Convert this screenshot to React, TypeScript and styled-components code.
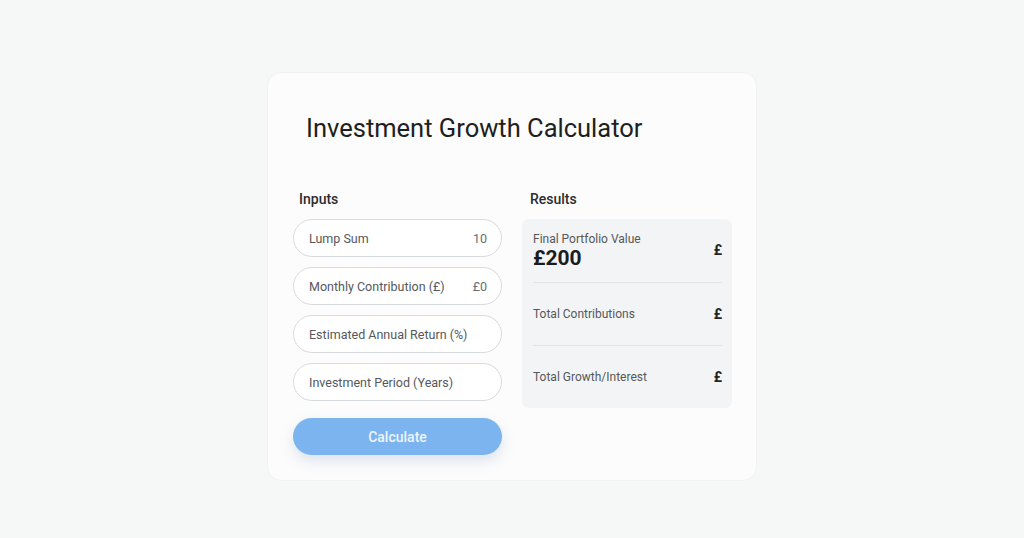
import React from "react";
import styled, { createGlobalStyle } from "styled-components";

const Global = createGlobalStyle`
  html, body { margin: 0; padding: 0; }
  body {
    background: #f6f7f7;
    font-family: Roboto, "Liberation Sans", Arial, sans-serif;
    -webkit-font-smoothing: antialiased;
  }
`;

const Page = styled.div`
  width: 1024px;
  height: 538px;
  display: flex;
  justify-content: center;
  align-items: flex-start;
  padding-top: 72px;
  box-sizing: border-box;
`;

const Card = styled.div`
  width: 490px;
  height: 409px;
  box-sizing: border-box;
  background: #fcfcfc;
  border: 1px solid #f0f1f1;
  border-radius: 14px;
  padding: 40px 24px 0 25px;
  display: flex;
  flex-direction: column;
`;

const Title = styled.h1`
  margin: 0 0 0 13px;
  font-size: 25.5px;
  line-height: 30px;
  font-weight: 400;
  color: #1d1f21;
`;

const Columns = styled.div`
  margin-top: 46px;
  display: grid;
  grid-template-columns: 209px 210px;
  column-gap: 20px;
`;

const Column = styled.div`
  display: flex;
  flex-direction: column;
`;

const SectionHeading = styled.h2<{ $indent: number }>`
  margin: 0 0 10px ${(p) => p.$indent}px;
  font-size: 14px;
  line-height: 20px;
  font-weight: 500;
  color: #2a2c2e;
`;

const Fields = styled.div`
  display: flex;
  flex-direction: column;
  gap: 10px;
`;

const Field = styled.div`
  height: 38px;
  box-sizing: border-box;
  border: 1px solid #d8dbde;
  border-radius: 19px;
  background: #ffffff;
  display: flex;
  align-items: center;
  justify-content: space-between;
  padding: 0 14px 0 15px;
  font-size: 12.5px;
  color: #55585b;
`;

const FieldValue = styled.span`
  color: #6a6d70;
`;

const Button = styled.button`
  margin-top: 17px;
  height: 37px;
  border: none;
  border-radius: 19px;
  background: #7cb4ef;
  color: #eef5fd;
  font-family: inherit;
  font-size: 14px;
  font-weight: 500;
  box-shadow: 0 6px 14px rgba(110, 140, 180, 0.22);
`;

const ResultsBox = styled.div`
  margin-top: 0;
  background: #f3f4f5;
  border-radius: 7px;
  padding: 0 10px 0 11px;
  display: flex;
  flex-direction: column;
`;

const Row = styled.div<{ $h: number; $last?: boolean }>`
  height: ${(p) => p.$h}px;
  box-sizing: border-box;
  display: flex;
  align-items: center;
  justify-content: space-between;
  border-bottom: ${(p) => (p.$last ? "none" : "1px solid #e2e4e6")};
`;

const RowText = styled.div`
  display: flex;
  flex-direction: column;
`;

const RowLabel = styled.span`
  font-size: 12px;
  line-height: 15px;
  color: #55585b;
`;

const BigValue = styled.span`
  font-size: 21px;
  line-height: 23px;
  font-weight: 700;
  color: #1b1c1e;
`;

const Pound = styled.span<{ $up?: boolean }>`
  font-size: 14px;
  font-weight: 700;
  color: #222426;
  margin-top: ${(p) => (p.$up ? "-2px" : "0")};
`;

export default function App() {
  return (
    <>
      <Global />
      <Page>
        <Card>
          <Title>Investment Growth Calculator</Title>
          <Columns>
            <Column>
              <SectionHeading $indent={6}>Inputs</SectionHeading>
              <Fields>
                <Field>
                  <span>Lump Sum</span>
                  <FieldValue>10</FieldValue>
                </Field>
                <Field>
                  <span>Monthly Contribution (£)</span>
                  <FieldValue>£0</FieldValue>
                </Field>
                <Field>
                  <span>Estimated Annual Return (%)</span>
                </Field>
                <Field>
                  <span>Investment Period (Years)</span>
                </Field>
              </Fields>
              <Button>Calculate</Button>
            </Column>
            <Column>
              <SectionHeading $indent={8}>Results</SectionHeading>
              <ResultsBox>
                <Row $h={64}>
                  <RowText>
                    <RowLabel>Final Portfolio Value</RowLabel>
                    <BigValue>£200</BigValue>
                  </RowText>
                  <Pound $up>£</Pound>
                </Row>
                <Row $h={63}>
                  <RowLabel>Total Contributions</RowLabel>
                  <Pound>£</Pound>
                </Row>
                <Row $h={62} $last>
                  <RowLabel>Total Growth/Interest</RowLabel>
                  <Pound>£</Pound>
                </Row>
              </ResultsBox>
            </Column>
          </Columns>
        </Card>
      </Page>
    </>
  );
}
